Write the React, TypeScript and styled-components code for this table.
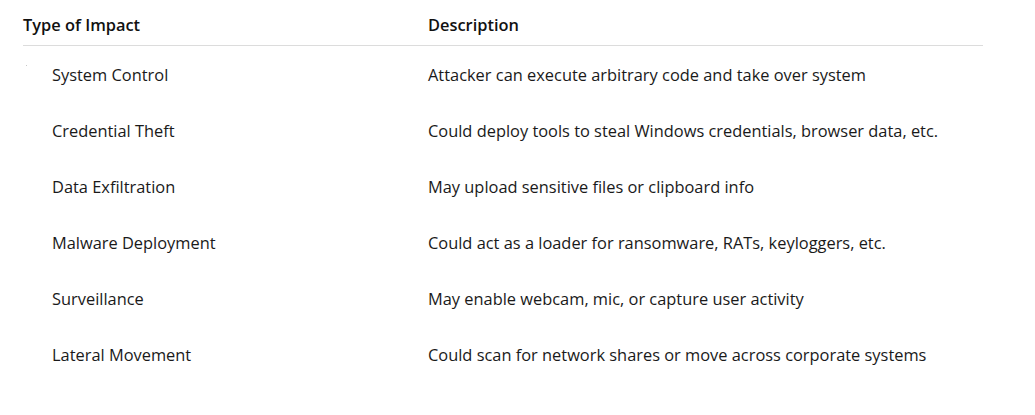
import React from "react";
import styled, { createGlobalStyle } from "styled-components";

const Global = createGlobalStyle`
  html, body { margin: 0; padding: 0; background: #ffffff; }
  body { font-family: "Segoe UI", "Open Sans", "Noto Sans", sans-serif; color: #1a1a1a; }
`;

const Page = styled.div`
  padding: 14px 52px 0 23px;
`;

const Table = styled.div`
  width: 960px;
  display: grid;
  grid-template-columns: 405px 1fr;
`;

const HeadCell = styled.div`
  font-size: 16.4px;
  font-weight: 600;
  line-height: 22px;
  padding-bottom: 9px;
  border-bottom: 1px solid #dcdcdc;
  color: #111;
`;

const Cell = styled.div<{ $indent?: boolean }>`
  font-size: 16.4px;
  line-height: 22px;
  height: 56px;
  display: flex;
  align-items: center;
  padding-left: ${(p) => (p.$indent ? "29px" : "0")};
  padding-top: 1px;
  box-sizing: border-box;
  color: #1a1a1a;
  position: relative;
`;

const Speck = styled.span`
  position: absolute;
  left: 3px;
  top: 19px;
  width: 1px;
  height: 1px;
  background: #c8c8c8;
`;

const rows: [string, string][] = [
  ["System Control", "Attacker can execute arbitrary code and take over system"],
  ["Credential Theft", "Could deploy tools to steal Windows credentials, browser data, etc."],
  ["Data Exfiltration", "May upload sensitive files or clipboard info"],
  ["Malware Deployment", "Could act as a loader for ransomware, RATs, keyloggers, etc."],
  ["Surveillance", "May enable webcam, mic, or capture user activity"],
  ["Lateral Movement", "Could scan for network shares or move across corporate systems"],
];

export default function App() {
  return (
    <Page>
      <Global />
      <Table>
        <HeadCell>Type of Impact</HeadCell>
        <HeadCell>Description</HeadCell>
        {rows.map(([a, b], i) => (
          <React.Fragment key={a}>
            <Cell $indent>
              {i === 0 && <Speck />}
              {a}
            </Cell>
            <Cell>{b}</Cell>
          </React.Fragment>
        ))}
      </Table>
    </Page>
  );
}
